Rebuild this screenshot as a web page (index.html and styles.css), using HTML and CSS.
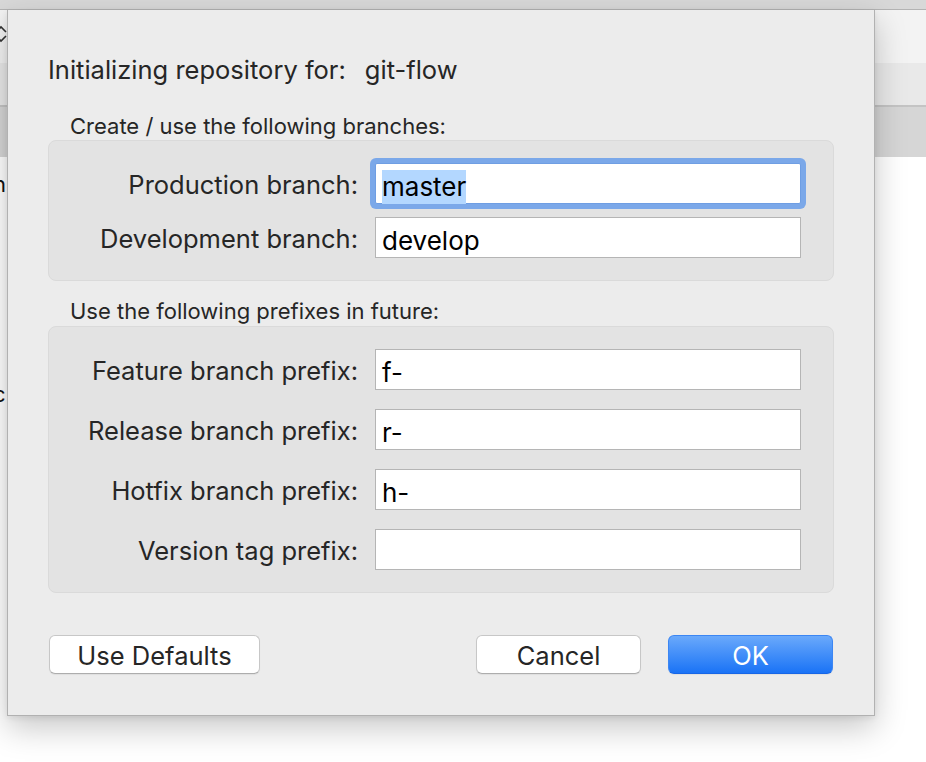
FILE: index.html
```html
<!DOCTYPE html>
<html>
<head>
<meta charset="utf-8">
<link rel="stylesheet" href="styles.css">
</head>
<body>
<div class="screen">
  <div class="topbar"></div>
  <div class="backdrop">
    <div class="bd-toolbar">
      <svg class="chevron" width="16" height="20" viewBox="0 0 16 20"><path d="M3 8 L8 3 L13 8 M3 12 L8 17 L13 12" fill="none" stroke="#333" stroke-width="1.6"/></svg>
    </div>
    <div class="bd-tabs"></div>
    <div class="bd-header"></div>
    <div class="bd-list">
      <div class="bd-item bd-item1">n</div>
      <div class="bd-item bd-item2">c</div>
    </div>
  </div>

  <div class="sheet">
    <div class="title">
      <span>Initializing repository for:</span>
      <span>git-flow</span>
    </div>

    <div class="group-label">Create / use the following branches:</div>
    <div class="group group-branches">
      <div class="label">Production branch:</div>
      <div class="field focused"><span class="sel">master</span></div>
      <div class="label">Development branch:</div>
      <div class="field">develop</div>
    </div>

    <div class="group-label second">Use the following prefixes in future:</div>
    <div class="group group-prefixes">
      <div class="label">Feature branch prefix:</div>
      <div class="field">f-</div>
      <div class="label">Release branch prefix:</div>
      <div class="field">r-</div>
      <div class="label">Hotfix branch prefix:</div>
      <div class="field">h-</div>
      <div class="label">Version tag prefix:</div>
      <div class="field"></div>
    </div>

    <div class="buttons">
      <button class="btn btn-defaults">Use Defaults</button>
      <div class="spacer"></div>
      <button class="btn btn-cancel">Cancel</button>
      <button class="btn btn-ok">OK</button>
    </div>
  </div>
</div>
</body>
</html>
```

FILE: styles.css
```css
* { box-sizing: border-box; }

html, body {
  margin: 0;
  padding: 0;
  background: #ffffff;
}

body {
  font-family: "Inter", "Liberation Sans", sans-serif;
  color: #262626;
}

.screen {
  position: relative;
  width: 926px;
  height: 762px;
  overflow: hidden;
}

.topbar {
  height: 10px;
  background: #d8d8d8;
  border-bottom: 1px solid #b3b3b3;
}

.backdrop {
  display: flex;
  flex-direction: column;
}

.bd-toolbar {
  height: 53px;
  background: #f3f3f3;
  position: relative;
}

.chevron {
  position: absolute;
  left: -7px;
  top: 14px;
}

.bd-tabs {
  height: 44px;
  background: #e9e9e9;
  border-bottom: 2px solid #c4c4c4;
}

.bd-header {
  height: 50px;
  background: #d6d6d6;
}

.bd-list {
  position: relative;
  height: 600px;
  background: #ffffff;
}

.bd-item {
  position: absolute;
  left: -7px;
  font-size: 22px;
  color: #111;
}

.bd-item1 { top: 14px; }
.bd-item2 { top: 224px; }

.sheet {
  position: absolute;
  left: 7px;
  top: 10px;
  width: 868px;
  height: 706px;
  background: #ececec;
  border: 1px solid #b1b1b1;
  border-top: none;
  box-shadow: 0 12px 30px rgba(0, 0, 0, 0.22), 0 2px 6px rgba(0, 0, 0, 0.08);
  padding: 45px 40px 0 40px;
  display: flex;
  flex-direction: column;
}

.title {
  display: flex;
  gap: 19px;
  font-size: 25.5px;
  line-height: 30px;
  color: #262626;
}

.group-label {
  margin-top: 28px;
  padding-left: 22px;
  font-size: 22px;
  line-height: 26px;
  height: 26px;
  color: #262626;
}

.group-label.second {
  margin-top: 17px;
}

.group {
  margin-top: 1px;
  background: #e3e3e3;
  border: 1px solid #dadada;
  border-radius: 8px;
  padding: 22px 32px 22px 0;
  display: grid;
  grid-template-columns: 309px 1fr;
  column-gap: 17px;
}

.group-label.second + .group { margin-top: 2px; }

.group-branches { row-gap: 13px; }
.group-prefixes { row-gap: 19px; }

.label {
  text-align: right;
  font-size: 25.5px;
  padding-top: 2px;
  line-height: 39px;
  height: 41px;
  white-space: nowrap;
  color: #262626;
}

.field {
  height: 41px;
  background: #ffffff;
  border: 1px solid #b5b5b5;
  padding: 6px 0 0 6px;
  font-size: 26px;
  line-height: 33px;
  color: #000;
  white-space: nowrap;
}

.field.focused {
  border-color: #6f9ee3;
  border-radius: 2px;
  box-shadow: 0 0 0 5px #7ba8e9;
}

.sel {
  background: #b3d7ff;
  padding: 1px 0 2px 0;
}

.buttons {
  margin-top: 42px;
  display: flex;
  align-items: center;
  padding-left: 1px;
  padding-right: 1px;
}

.spacer { flex: 1; }

.btn {
  font-family: "Inter", "Liberation Sans", sans-serif;
  font-size: 25.5px;
  height: 39px;
  padding: 1px 0 0 0;
  border-radius: 6px;
  border: 1px solid #c7c7c7;
  border-bottom-color: #adadad;
  background: #ffffff;
  color: #262626;
  box-shadow: 0 1px 1px rgba(0, 0, 0, 0.06);
}

.btn-defaults { width: 211px; }
.btn-cancel { width: 165px; margin-right: 27px; }

.btn-ok {
  width: 165px;
  border: 1px solid #3c86f3;
  border-bottom-color: #1766e6;
  background: linear-gradient(to bottom, #6aa9fb, #1a73f6);
  color: #ffffff;
}
```
